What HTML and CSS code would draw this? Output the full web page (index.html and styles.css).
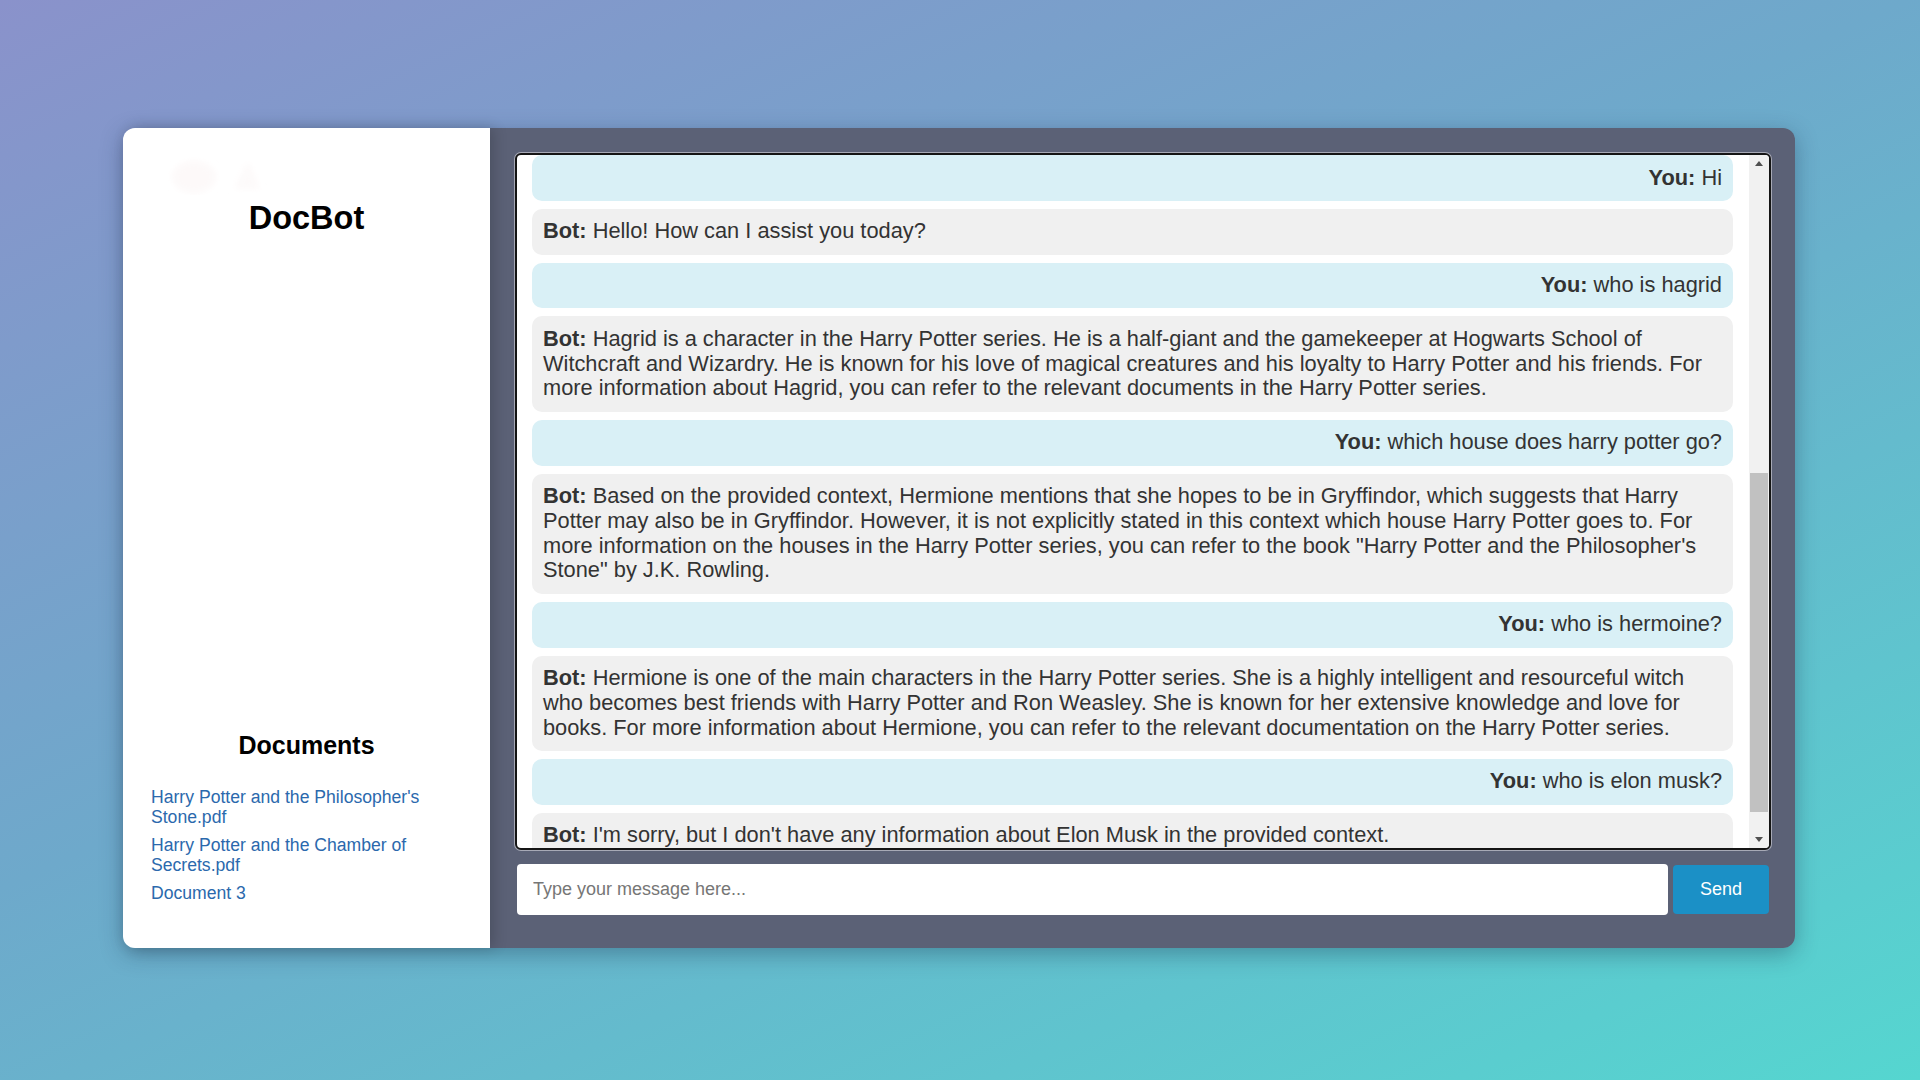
FILE: index.html
```html
<!DOCTYPE html>
<html lang="en">
<head>
<meta charset="utf-8">
<title>DocBot</title>
<link rel="stylesheet" href="styles.css">
</head>
<body>
<div class="app">
  <aside class="sidebar">
    <div class="brand">
      <svg class="logo" width="110" height="40" viewBox="0 0 110 40">
        <defs>
          <filter id="soft" x="-30%" y="-30%" width="160%" height="160%">
            <feGaussianBlur stdDeviation="3"/>
          </filter>
        </defs>
        <g filter="url(#soft)">
          <ellipse cx="26" cy="22" rx="22" ry="16" fill="#fdf9f9"/>
          <path d="M80 6 L92 34 L66 34 Z" fill="#fdfafa"/>
        </g>
      </svg>
      <h1 class="title">DocBot</h1>
    </div>
    <div class="docs">
      <h2 class="docs-title">Documents</h2>
      <ul class="doc-list">
        <li><a class="doc-link" href="#">Harry Potter and the Philosopher's Stone.pdf</a></li>
        <li><a class="doc-link" href="#">Harry Potter and the Chamber of Secrets.pdf</a></li>
        <li><a class="doc-link" href="#">Document 3</a></li>
      </ul>
    </div>
  </aside>
  <main class="chat">
    <div class="chat-box">
      <div class="messages">
        <div class="msg user"><b>You:</b> Hi</div>
        <div class="msg bot"><b>Bot:</b> Hello! How can I assist you today?</div>
        <div class="msg user"><b>You:</b> who is hagrid</div>
        <div class="msg bot"><b>Bot:</b> Hagrid is a character in the Harry Potter series. He is a half-giant and the gamekeeper at Hogwarts School of Witchcraft and Wizardry. He is known for his love of magical creatures and his loyalty to Harry Potter and his friends. For more information about Hagrid, you can refer to the relevant documents in the Harry Potter series.</div>
        <div class="msg user"><b>You:</b> which house does harry potter go?</div>
        <div class="msg bot"><b>Bot:</b> Based on the provided context, Hermione mentions that she hopes to be in Gryffindor, which suggests that Harry Potter may also be in Gryffindor. However, it is not explicitly stated in this context which house Harry Potter goes to. For more information on the houses in the Harry Potter series, you can refer to the book "Harry Potter and the Philosopher's Stone" by J.K. Rowling.</div>
        <div class="msg user"><b>You:</b> who is hermoine?</div>
        <div class="msg bot"><b>Bot:</b> Hermione is one of the main characters in the Harry Potter series. She is a highly intelligent and resourceful witch who becomes best friends with Harry Potter and Ron Weasley. She is known for her extensive knowledge and love for books. For more information about Hermione, you can refer to the relevant documentation on the Harry Potter series.</div>
        <div class="msg user"><b>You:</b> who is elon musk?</div>
        <div class="msg bot"><b>Bot:</b> I'm sorry, but I don't have any information about Elon Musk in the provided context.</div>
      </div>
      <div class="scrollbar">
        <div class="sb-btn"><span class="arrow-up"></span></div>
        <div class="sb-track"><div class="sb-thumb"></div></div>
        <div class="sb-btn"><span class="arrow-down"></span></div>
      </div>
    </div>
    <form class="composer">
      <input class="composer-input" type="text" placeholder="Type your message here...">
      <button class="send-btn" type="button">Send</button>
    </form>
  </main>
</div>
</body>
</html>
```
FILE: styles.css
```css
* { box-sizing: border-box; }

html, body {
  margin: 0;
  height: 100%;
}

body {
  font-family: "Liberation Sans", Arial, sans-serif;
  background: linear-gradient(155deg, #8a92cb 0%, #6ea9cb 45%, #55d6d0 100%);
  display: flex;
  align-items: center;
  justify-content: center;
}

.app {
  width: 1672px;
  height: 820px;
  display: flex;
  border-radius: 12px;
  box-shadow: 0 6px 22px rgba(20, 40, 70, 0.35);
  margin-top: -4px;
  margin-left: -2px;
}

/* Sidebar */
.sidebar {
  width: 367px;
  flex: none;
  background: #ffffff;
  border-radius: 12px 0 0 12px;
  display: flex;
  flex-direction: column;
  padding: 27px 28px 45px;
  box-shadow: 4px 0 14px rgba(0, 0, 0, 0.18);
  position: relative;
  z-index: 1;
}

.brand {
  display: flex;
  flex-direction: column;
  align-items: center;
}

.logo {
  display: block;
  align-self: flex-start;
  margin-left: 17px;
}

.title {
  margin: 5px 0 0;
  font-size: 32.5px;
  font-weight: bold;
  color: #000;
  line-height: normal;
}

.docs {
  margin-top: auto;
}

.docs-title {
  margin: 0 0 27px;
  font-size: 25px;
  font-weight: bold;
  text-align: center;
  color: #000;
  line-height: normal;
}

.doc-list {
  list-style: none;
  margin: 0;
  padding: 0;
}

.doc-list li {
  margin-bottom: 7.4px;
  font-size: 17.6px;
  line-height: 20.2px;
}

.doc-list li:last-child {
  margin-bottom: 0;
}

.doc-link {
  color: #2b69ad;
  text-decoration: none;
}

/* Chat */
.chat {
  flex: 1;
  background: #5b6176;
  border-radius: 0 12px 12px 0;
  padding: 25px 24px 33px 25px;
  display: flex;
  flex-direction: column;
}

.chat-box {
  flex: 1;
  min-height: 0;
  background: #ffffff;
  border: 2px solid #151515;
  border-radius: 6px;
  box-shadow: 0 0 0 1px rgba(230, 230, 235, 0.55);
  display: flex;
  overflow: hidden;
}

.messages {
  flex: 1;
  min-width: 0;
  overflow: hidden;
  padding: 0 16px 0 15px;
}

.msg {
  font-size: 21.8px;
  line-height: 24.8px;
  color: #333;
  padding: 10.5px 11px;
  border-radius: 10px;
  margin-bottom: 8px;
}

.msg b {
  font-weight: bold;
}

.msg.user {
  background: #d9f0f6;
  text-align: right;
}

.msg.bot {
  background: #f0f0f0;
}

/* Scrollbar */
.scrollbar {
  width: 20px;
  flex: none;
  background: #f1f1f1;
  display: flex;
  flex-direction: column;
}

.sb-btn {
  height: 17px;
  flex: none;
  display: flex;
  align-items: center;
  justify-content: center;
}

.arrow-up {
  width: 0;
  height: 0;
  border-left: 4.5px solid transparent;
  border-right: 4.5px solid transparent;
  border-bottom: 5px solid #505050;
}

.arrow-down {
  width: 0;
  height: 0;
  border-left: 4.5px solid transparent;
  border-right: 4.5px solid transparent;
  border-top: 5px solid #505050;
}

.sb-track {
  flex: 1;
  padding: 301px 1px 0 1px;
}

.sb-thumb {
  height: 339px;
  background: #c1c1c1;
}

/* Composer */
.composer {
  margin: 14px 0 0;
  padding: 0 2px;
  height: 51px;
  display: flex;
  align-items: center;
  gap: 5px;
}

.composer-input {
  flex: 1;
  height: 51px;
  border: none;
  border-radius: 4px;
  background: #fff;
  padding: 0 16px;
  font-family: "Liberation Sans", Arial, sans-serif;
  font-size: 18px;
  color: #333;
  outline: none;
}

.composer-input::placeholder {
  color: #767676;
}

.send-btn {
  width: 96px;
  height: 49px;
  border: none;
  border-radius: 4px;
  background: #1b90c6;
  color: #fff;
  font-family: "Liberation Sans", Arial, sans-serif;
  font-size: 18px;
  cursor: pointer;
}
```
